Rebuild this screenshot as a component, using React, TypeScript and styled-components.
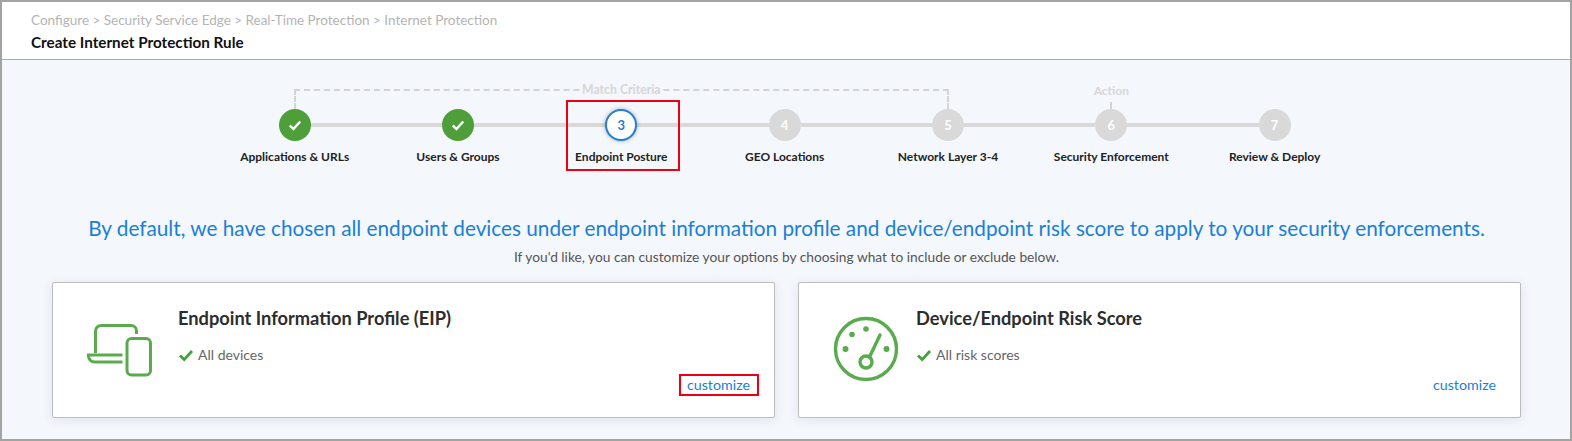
import React from 'react';
import styled, { createGlobalStyle } from 'styled-components';

const GlobalStyle = createGlobalStyle`
  html, body {
    margin: 0;
    padding: 0;
    background: #f4f7fc;
    font-family: Lato, "Open Sans", sans-serif;
  }
  * {
    box-sizing: border-box;
  }
`;

const steps = [
  { label: 'Applications & URLs', state: 'done' },
  { label: 'Users & Groups', state: 'done' },
  { label: 'Endpoint Posture', state: 'active' },
  { label: 'GEO Locations', state: 'todo' },
  { label: 'Network Layer 3-4', state: 'todo' },
  { label: 'Security Enforcement', state: 'todo' },
  { label: 'Review & Deploy', state: 'todo' },
];

const CheckMark = ({ size, color }: { size: number; color: string }) => (
  <svg width={size} height={size} viewBox="0 0 16 16" fill="none">
    <path d="M2 8.5 L6.2 12.6 L14 4" stroke={color} strokeWidth="2.8" strokeLinejoin="miter" />
  </svg>
);

const DevicesIcon = () => (
  <svg width="66" height="54" viewBox="0 0 66 54" fill="none" stroke="#5aaa4e" strokeWidth="3">
    <path d="M8.5 29 V7 a5.5 5.5 0 0 1 5.5 -5.5 H44 a5.5 5.5 0 0 1 5.5 5.5 V10" />
    <path d="M35.5 31 H1.5 V32 a6 6 0 0 0 6 6 H35.5" />
    <rect x="40" y="14.5" width="23.5" height="36.5" rx="4.5" />
  </svg>
);

const GaugeIcon = () => (
  <svg width="66" height="66" viewBox="0 0 66 66" fill="none">
    <circle cx="33" cy="33" r="30.5" stroke="#5aaa4e" strokeWidth="3.4" />
    <circle cx="33" cy="46" r="6" stroke="#5aaa4e" strokeWidth="3.4" />
    <path d="M36.5 41 L47 19" stroke="#5aaa4e" strokeWidth="3.4" strokeLinecap="round" />
    <circle cx="12.5" cy="33" r="3" fill="#5aaa4e" />
    <circle cx="19" cy="18.5" r="2.8" fill="#5aaa4e" />
    <circle cx="33" cy="13" r="2.8" fill="#5aaa4e" />
    <circle cx="53.5" cy="33" r="3" fill="#5aaa4e" />
  </svg>
);

export default function App() {
  return (
    <>
      <GlobalStyle />
      <Frame>
        <Header>
          <Breadcrumb>Configure &gt; Security Service Edge &gt; Real-Time Protection &gt; Internet Protection</Breadcrumb>
          <PageTitle>Create Internet Protection Rule</PageTitle>
        </Header>
        <Main>
          <Stepper>
            <Bracket>
              <GroupLabel>Match Criteria</GroupLabel>
            </Bracket>
            <ActionGroup>
              <ActionLabel>Action</ActionLabel>
              <Tick />
            </ActionGroup>
            {steps.map((step, i) => (
              <Step key={step.label} $last={i === steps.length - 1} $highlight={step.state === 'active'}>
                <Circle $state={step.state}>
                  {step.state === 'done' ? <CheckMark size={14} color="#fff" /> : i + 1}
                </Circle>
                <StepLabel>{step.label}</StepLabel>
              </Step>
            ))}
          </Stepper>

          <Headline>
            By default, we have chosen all endpoint devices under endpoint information profile and device/endpoint risk
            score to apply to your security enforcements.
          </Headline>
          <Subline>If you'd like, you can customize your options by choosing what to include or exclude below.</Subline>

          <Cards>
            <Card>
              <IconSlot $left={35} $right={25} $top={41}>
                <DevicesIcon />
              </IconSlot>
              <CardBody>
                <CardTitle>Endpoint Information Profile (EIP)</CardTitle>
                <Status>
                  <CheckMark size={16} color="#45a03a" />
                  All devices
                </Status>
                <Customize $highlight>customize</Customize>
              </CardBody>
            </Card>
            <Card>
              <IconSlot $left={35} $right={17} $top={33}>
                <GaugeIcon />
              </IconSlot>
              <CardBody>
                <CardTitle>Device/Endpoint Risk Score</CardTitle>
                <Status>
                  <CheckMark size={16} color="#45a03a" />
                  All risk scores
                </Status>
                <Customize>customize</Customize>
              </CardBody>
            </Card>
          </Cards>
        </Main>
      </Frame>
    </>
  );
}

const Frame = styled.div`
  width: 1572px;
  height: 441px;
  border: 2px solid #a3a3a3;
  display: flex;
  flex-direction: column;
  overflow: hidden;
`;

const Header = styled.header`
  height: 58px;
  flex-shrink: 0;
  background: #fff;
  border-bottom: 1px solid #ababab;
  padding: 9px 29px 0;
`;

const Breadcrumb = styled.div`
  font-size: 13.5px;
  line-height: 18px;
  color: #b4b4b4;
`;

const PageTitle = styled.div`
  margin-top: 4px;
  font-size: 15.25px;
  line-height: 18px;
  font-weight: 700;
  color: #111;
`;

const Main = styled.main`
  flex: 1;
  background: #f4f7fc;
  padding: 24px 49px 0 50px;
`;

const Stepper = styled.div`
  display: grid;
  grid-template-columns: repeat(7, 163.33px);
  grid-template-rows: 25px auto;
  width: 1143px;
  margin-left: 161px;
`;

const Bracket = styled.div`
  grid-column: 1 / 6;
  grid-row: 1;
  margin: 5px 80.5px 0 80.5px;
  border: 2px dashed #d4d4d4;
  border-bottom: none;
  display: flex;
  justify-content: center;
`;

const GroupLabel = styled.span`
  height: 16px;
  margin-top: -9px;
  padding: 0 2px;
  background: #f4f7fc;
  font-size: 12.25px;
  line-height: 16px;
  font-weight: 700;
  color: #d6d6d6;
`;

const ActionGroup = styled.div`
  grid-column: 6;
  grid-row: 1;
  display: flex;
  flex-direction: column;
  align-items: center;
  margin-top: -1px;
`;

const ActionLabel = styled.span`
  font-size: 12px;
  line-height: 16px;
  font-weight: 700;
  color: #d6d6d6;
`;

const Tick = styled.span`
  margin-top: 3px;
  flex: 1;
  width: 0;
  border-left: 2px dashed #d4d4d4;
`;

const Step = styled.div<{ $last?: boolean; $highlight?: boolean }>`
  grid-row: 2;
  position: relative;
  display: flex;
  flex-direction: column;
  align-items: center;

  &::before {
    content: '';
    display: ${(p) => (p.$last ? 'none' : 'block')};
    position: absolute;
    top: 14px;
    left: 50%;
    width: 100%;
    height: 4px;
    background: #d9d9d9;
  }

  &::after {
    content: '';
    box-sizing: border-box;
    display: ${(p) => (p.$highlight ? 'block' : 'none')};
    position: absolute;
    top: -9px;
    left: 26px;
    width: 114px;
    height: 71px;
    border: 2px solid #ec0012;
  }
`;

const Circle = styled.div<{ $state: string }>`
  position: relative;
  z-index: 1;
  width: 32px;
  height: 32px;
  border-radius: 50%;
  display: flex;
  align-items: center;
  justify-content: center;
  font-size: 13px;
  font-weight: 700;
  color: ${(p) => (p.$state === 'active' ? '#1f7fd4' : '#fff')};
  background: ${(p) => (p.$state === 'done' ? '#4e9f39' : p.$state === 'active' ? '#fff' : '#d9d9d9')};
  border: ${(p) => (p.$state === 'active' ? '2px solid #1f7fd4' : 'none')};
  box-shadow: ${(p) => (p.$state === 'active' ? '0 0 4px rgba(0, 0, 0, 0.3)' : 'none')};
`;

const StepLabel = styled.div`
  margin-top: 8px;
  font-size: 12px;
  line-height: 16px;
  font-weight: 700;
  color: #222;
  white-space: nowrap;
`;

const Headline = styled.h2`
  margin: 50px 0 0;
  font-size: 20.75px;
  line-height: 26px;
  font-weight: 400;
  color: #1a7fd6;
  text-align: center;
  white-space: nowrap;
`;

const Subline = styled.p`
  margin: 7px 0 0;
  font-size: 13.75px;
  line-height: 18px;
  color: #555;
  text-align: center;
`;

const Cards = styled.div`
  display: flex;
  gap: 23px;
  margin-top: 16px;
`;

const Card = styled.section`
  flex: 1;
  height: 136px;
  display: flex;
  background: #fff;
  border: 1px solid #bcbcbc;
  border-radius: 2px;
  box-shadow: 0 2px 12px rgba(60, 80, 110, 0.1);
`;

const IconSlot = styled.div<{ $left: number; $right: number; $top: number }>`
  flex-shrink: 0;
  margin: ${(p) => p.$top}px ${(p) => p.$right}px 0 ${(p) => p.$left - 1}px;
`;

const CardBody = styled.div`
  flex: 1;
  display: flex;
  flex-direction: column;
  padding: 23px 24px 23px 0;
`;

const CardTitle = styled.h3`
  margin: 0;
  font-size: 18.25px;
  line-height: 24px;
  font-weight: 700;
  color: #2d2d2d;
`;

const Status = styled.div`
  display: flex;
  align-items: center;
  gap: 4px;
  margin-top: 15px;
  font-size: 14px;
  line-height: 20px;
  color: #666;
`;

const Customize = styled.a<{ $highlight?: boolean }>`
  position: relative;
  margin-top: auto;
  align-self: flex-end;
  font-size: 14.25px;
  line-height: 18px;
  color: #1a7fd6;

  &::after {
    content: '';
    box-sizing: border-box;
    display: ${(p) => (p.$highlight ? 'block' : 'none')};
    position: absolute;
    inset: -2px -9px -2px -8px;
    border: 2px solid #ec0012;
  }
`;
